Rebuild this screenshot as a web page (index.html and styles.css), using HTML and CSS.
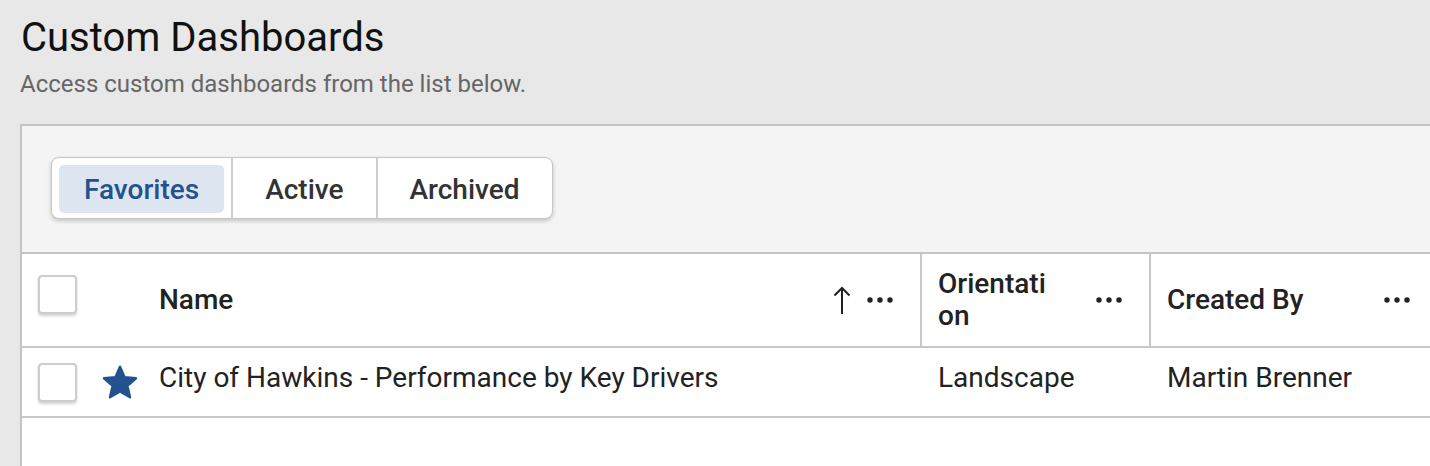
FILE: index.html
```html
<!DOCTYPE html>
<html lang="en">
  <head>
    <meta charset="UTF-8" />
    <meta name="viewport" content="width=device-width, initial-scale=1.0" />
    <title>Custom Dashboards</title>
    <link rel="stylesheet" href="styles.css">
  </head>
  <body>
    <div class="page">
      <h1 class="page-title">Custom Dashboards</h1>
      <p class="page-subtitle">Access custom dashboards from the list below.</p>

      <div class="panel">
        <div class="toolbar">
          <div class="segmented">
            <div class="segment"><button class="seg-btn active">Favorites</button></div>
            <div class="segment"><button class="seg-btn">Active</button></div>
            <div class="segment"><button class="seg-btn">Archived</button></div>
          </div>
        </div>

        <div class="grid">
          <!-- header row -->
          <div class="cell head cell-check"><span class="checkbox"></span></div>
          <div class="cell head"></div>
          <div class="cell head col">
            <span class="th-label">Name</span>
            <span class="th-tools">
              <svg class="sort" width="18" height="29" viewBox="0 0 18 29">
                <path d="M9 28V2M1.5 9.5L9 2l7.5 7.5" fill="none" stroke="#222" stroke-width="2" />
              </svg>
              <svg class="dots" width="26" height="6" viewBox="0 0 26 6">
                <circle cx="3" cy="3" r="2.7" fill="#222" />
                <circle cx="13" cy="3" r="2.7" fill="#222" />
                <circle cx="23" cy="3" r="2.7" fill="#222" />
              </svg>
            </span>
          </div>
          <div class="cell head col divided">
            <span class="th-label">Orientation</span>
            <span class="th-tools">
              <svg class="dots" width="26" height="6" viewBox="0 0 26 6">
                <circle cx="3" cy="3" r="2.7" fill="#222" />
                <circle cx="13" cy="3" r="2.7" fill="#222" />
                <circle cx="23" cy="3" r="2.7" fill="#222" />
              </svg>
            </span>
          </div>
          <div class="cell head col divided">
            <span class="th-label">Created By</span>
            <span class="th-tools">
              <svg class="dots" width="26" height="6" viewBox="0 0 26 6">
                <circle cx="3" cy="3" r="2.7" fill="#222" />
                <circle cx="13" cy="3" r="2.7" fill="#222" />
                <circle cx="23" cy="3" r="2.7" fill="#222" />
              </svg>
            </span>
          </div>

          <!-- data row -->
          <div class="cell row cell-check"><span class="checkbox"></span></div>
          <div class="cell row cell-star">
            <svg width="40" height="40" viewBox="0 0 24 24">
              <path d="M12 17.6l6 3.5-1.6-6.8 5.2-4.5-6.9-.6L12 2.9 9.3 9.2l-6.9.6 5.2 4.5-1.6 6.8z"
                fill="#23528f" stroke="#23528f" stroke-width="1.5" stroke-linejoin="round" />
            </svg>
          </div>
          <div class="cell row col text">City of Hawkins - Performance by Key Drivers</div>
          <div class="cell row col text">Landscape</div>
          <div class="cell row col text">Martin Brenner</div>
        </div>
      </div>
    </div>
  </body>
</html>
```

FILE: styles.css
```css
html,
body {
  overflow: hidden;
}
body {
  margin: 0;
  background-color: #e8e8e8;
  font-family: Roboto, "Liberation Sans", Arial, sans-serif;
  color: #222;
}
.page {
  padding: 15px 0 0 20px;
}
.page-title {
  margin: 0 0 0 1px;
  font-size: 40px;
  line-height: 46px;
  font-weight: 400;
  color: #111;
}
.page-subtitle {
  margin: 9px 0 0 0;
  font-size: 24px;
  line-height: 28px;
  color: #666;
}
.panel {
  margin-top: 26px;
  width: 1417px;
  height: 342px;
  box-sizing: border-box;
  border-top: 2px solid #c4c4c4;
  border-left: 2px solid #c4c4c4;
  background: #fff;
}
.toolbar {
  background: #f4f4f4;
  padding: 31px 0 0 29px;
  height: 128px;
  box-sizing: border-box;
  border-bottom: 2px solid #c4c4c4;
}
.segmented {
  display: inline-flex;
  background: #fff;
  border: 1px solid #c6c6c6;
  border-radius: 8px;
  box-shadow: 0 2px 4px rgba(0, 0, 0, 0.2);
}
.segment {
  padding: 7px 7px 5px;
}
.segment + .segment {
  border-left: 2px solid #cfcfcf;
}
.seg-btn {
  display: block;
  height: 48px;
  padding: 0 25px;
  border: none;
  border-radius: 5px;
  background: transparent;
  font-family: inherit;
  font-size: 28px;
  font-weight: 500;
  color: #333;
}
.seg-btn.active {
  background: #dde6f0;
  color: #23528f;
}
.grid {
  display: grid;
  grid-template-columns: 68px 51px 779px 229px 1fr;
}
.cell {
  display: flex;
  align-items: center;
  box-sizing: border-box;
  border-bottom: 2px solid #c8c8c8;
}
.head {
  height: 94px;
}
.row {
  height: 70px;
}
.cell-check {
  padding-left: 16px;
}
.head.cell-check {
  align-items: flex-start;
  padding-top: 21px;
}
.checkbox {
  display: block;
  width: 39px;
  height: 39px;
  box-sizing: border-box;
  border: 2px solid #cdcdcd;
  border-radius: 4px;
  background: #fff;
  box-shadow: 0 2px 3px rgba(0, 0, 0, 0.18);
}
.cell-star {
  padding-left: 10px;
}
.col {
  padding: 0 27px 0 18px;
}
.divided {
  border-left: 2px solid #c8c8c8;
  padding-left: 16px;
}
.th-label {
  flex: 1;
  min-width: 0;
  font-size: 28px;
  line-height: 32px;
  font-weight: 500;
  word-break: break-all;
  color: #222;
}
.th-tools {
  display: flex;
  align-items: center;
  gap: 16px;
  margin-left: 36px;
}
.text {
  font-size: 28px;
  padding-bottom: 10px;
  white-space: nowrap;
}
```
